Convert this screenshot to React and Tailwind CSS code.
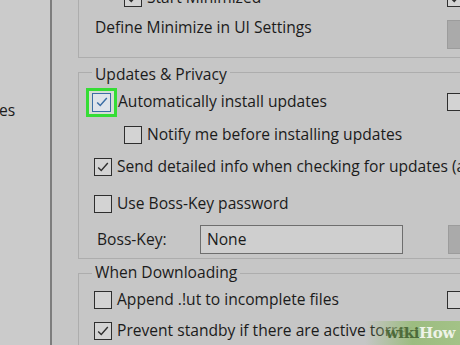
import { Fragment } from "react";

const font = { fontFamily: '"Open Sans", "Noto Sans", sans-serif' };

function Box({ checked, className = "" }) {
  return (
    <span
      className={
        "flex w-[18px] h-[18px] shrink-0 items-center justify-center border-[1.5px] border-[#2e2e2e] bg-[#d3d3d3] " +
        className
      }
    >
      {checked && (
        <svg viewBox="0 0 16 16" className="w-[14px] h-[14px]">
          <polyline points="2.5,8.5 6,12 13.5,3.5" fill="none" stroke="#2e2e2e" strokeWidth="1.6" />
        </svg>
      )}
    </span>
  );
}

function Row({ h, pl, checked, label, right, children }) {
  return (
    <div className={"flex items-center whitespace-nowrap " + h}>
      <div className={"flex items-center gap-[5px] w-[368px] shrink-0 " + pl}>
        {children ?? (
          <>
            <Box checked={checked} />
            <span>{label}</span>
          </>
        )}
      </div>
      {right}
    </div>
  );
}

function GroupTitle({ children, mt = "-mt-[9px]" }) {
  return (
    <div className={"self-start ml-[13px] px-[3px] leading-[20px] bg-[#c6c6c6] " + mt}>{children}</div>
  );
}

export default function App() {
  return (
    <div
      className="relative flex w-[460px] h-[345px] overflow-hidden bg-[#c6c6c6] text-[15.6px] text-[#1b1b1b]"
      style={font}
    >
      <div className="w-[52px] shrink-0 bg-[#cbcbcb] border-r-2 border-[#7d7d7d] pt-[99px]">
        <div className="-ml-[1px] leading-[22px]">es</div>
      </div>

      <div className="flex-1 min-w-0 overflow-hidden">
        <div className="w-[480px] ml-[26px] -mt-[17px] flex flex-col">
          {/* General group (top cut off) */}
          <div className="flex flex-col border-l border-b border-[#adadad] pb-[16px]">
            <Row
              h="h-[30px]"
              pl="pl-[45px]"
              checked
              label="Start Minimized"
              right={<Box checked />}
            />
            <div className="flex items-start h-[28px] whitespace-nowrap">
              <div className="w-[368px] shrink-0 pl-[16px] leading-[28px]">Define Minimize in UI Settings</div>
              <div className="mt-[7px] w-[40px] h-[29px] bg-[#aaaaaa] border border-[#9c9c9c]" />
            </div>
          </div>

          {/* Updates & Privacy */}
          <div className="mt-[14px] flex flex-col border-l border-t border-b border-[#adadad] pb-[4px]">
            <GroupTitle>Updates &amp; Privacy</GroupTitle>
            <Row h="h-[36px]" pl="pl-[7px]" right={<Box />}>
              <span className="flex items-center justify-center w-[31px] h-[29px] border-[3px] border-[#35dd35] bg-[#d6ddd6]">
                <span className="flex w-[19px] h-[19px] items-center justify-center border-[1.5px] border-[#3b6ea5] bg-[#dfe4ea]">
                  <svg viewBox="0 0 16 16" className="w-[14px] h-[14px]">
                    <polyline points="2.5,8.5 6,12 13.5,3.5" fill="none" stroke="#3b6ea5" strokeWidth="1.7" />
                  </svg>
                </span>
              </span>
              <span className="-ml-[4px]">Automatically install updates</span>
            </Row>
            <Row h="h-[30px]" pl="pl-[45px]" label="Notify me before installing updates" />
            <div className="flex items-center h-[34px] pl-[15px] gap-[5px] whitespace-nowrap">
              <Box checked />
              <span>Send detailed info when checking for updates (anonymous)</span>
            </div>
            <Row h="h-[40px]" pl="pl-[15px]" label="Use Boss-Key password" />
            <div className="mt-[1px] flex items-center h-[29px] whitespace-nowrap">
              <div className="w-[121px] shrink-0 pl-[18px]">Boss-Key:</div>
              <div className="w-[203px] h-[29px] shrink-0 flex items-center pl-[6px] bg-[#cfcfcf] border border-[#6e6e6e]">
                None
              </div>
              <div className="ml-[45px] w-[40px] h-[29px] bg-[#aaaaaa] border border-[#9c9c9c]" />
            </div>
          </div>

          {/* When Downloading */}
          <div className="mt-[14px] flex flex-col border-l border-t border-[#adadad] h-[120px]">
            <GroupTitle mt="-mt-[12px]">When Downloading</GroupTitle>
            <Row
              h="h-[36px]"
              pl="pl-[15px]"
              label="Append .!ut to incomplete files"
              right={<Box className="border-2 border-[#1e1e1e]" />}
            />
            <div className="flex items-center h-[26px] pl-[15px] gap-[5px] whitespace-nowrap">
              <Box checked />
              <span>Prevent standby if there are active torrents</span>
            </div>
          </div>
        </div>
      </div>

      {/* wikiHow watermark */}
      <div className="absolute right-0 bottom-0 w-[95px] h-[24px] flex items-center justify-end pr-[5px] bg-gradient-to-r from-[#9cbc8000] via-[#9cbc80] to-[#a3c287]">
        <span
          className="text-[15px] font-bold leading-none tracking-tight"
          style={{ fontFamily: '"DejaVu Serif", "Liberation Serif", serif' }}
        >
          <span className="text-[#4d6b3a]">wiki</span>
          <span className="text-[#eef3e8]">How</span>
        </span>
      </div>
    </div>
  );
}
